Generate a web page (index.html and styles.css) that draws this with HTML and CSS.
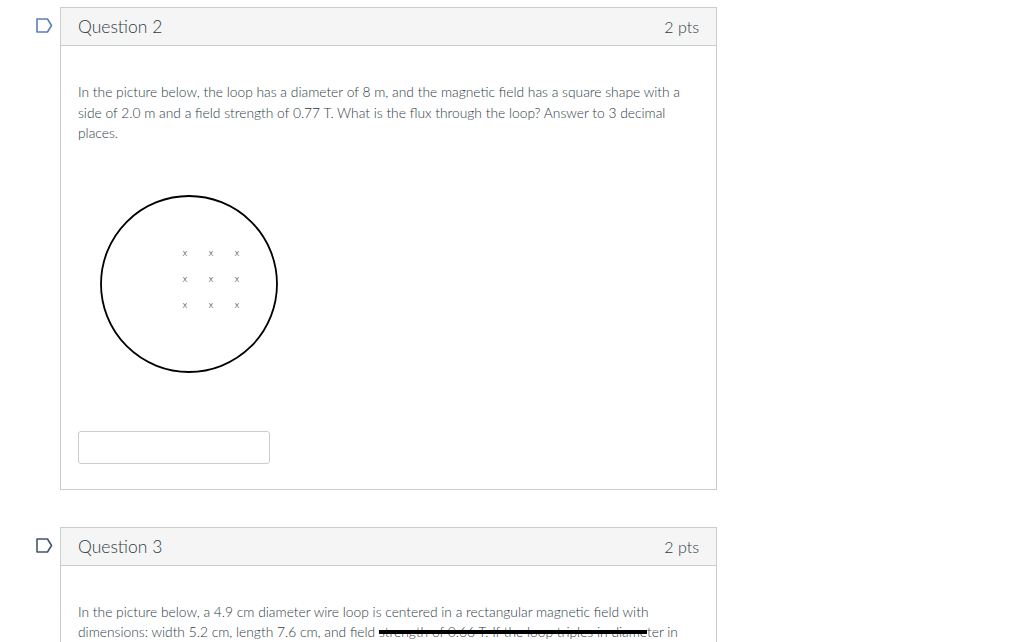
FILE: index.html
```html
<!DOCTYPE html>
<html>
<head>
<meta charset="utf-8">
<link rel="stylesheet" href="styles.css">
</head>
<body>
<div class="page">
  <div class="question">
    <div class="flag-col">
      <svg class="flag flag-blue" width="17" height="15" viewBox="0 0 17 15"><path d="M1 1 H11.5 L15.5 7.5 L11.5 14 H1 Z" fill="none" stroke-width="1.6" stroke-linejoin="round"/></svg>
    </div>
    <div class="card">
      <div class="card-header">
        <span class="q-title">Question 2</span>
        <span class="q-pts">2 pts</span>
      </div>
      <div class="card-body">
        <p class="q-text">In the picture below, the loop has a diameter of 8 m, and the magnetic field has a square shape with a side of 2.0 m and a field strength of 0.77 T. What is the flux through the loop? Answer to 3 decimal places.</p>
        <svg class="figure" width="200" height="200" viewBox="0 0 200 200">
          <circle cx="100" cy="100" r="88" fill="none" stroke="#000" stroke-width="1.8"/>
          <g class="xs" font-size="9" text-anchor="middle" fill="#111">
            <text x="96" y="72">x</text><text x="122" y="72">x</text><text x="148" y="72">x</text>
            <text x="96" y="98">x</text><text x="122" y="98">x</text><text x="148" y="98">x</text>
            <text x="96" y="124">x</text><text x="122" y="124">x</text><text x="148" y="124">x</text>
          </g>
        </svg>
        <input class="answer" type="text">
      </div>
    </div>
  </div>

  <div class="question">
    <div class="flag-col">
      <svg class="flag flag-dark" width="17" height="15" viewBox="0 0 17 15"><path d="M1 1 H11.5 L15.5 7.5 L11.5 14 H1 Z" fill="none" stroke-width="1.6" stroke-linejoin="round"/></svg>
    </div>
    <div class="card">
      <div class="card-header">
        <span class="q-title">Question 3</span>
        <span class="q-pts">2 pts</span>
      </div>
      <div class="card-body">
        <p class="q-text">In the picture below, a 4.9 cm diameter wire loop is centered in a rectangular magnetic field with dimensions: width 5.2 cm, length 7.6 cm, and field <span class="scribble">strength of 0.66 T. If the loop triples in diame</span>ter in</p>
      </div>
    </div>
  </div>
</div>
</body>
</html>
```

FILE: styles.css
```css
html, body {
  margin: 0;
  padding: 0;
  background: #fff;
}
body {
  font-family: Lato, "Liberation Sans", sans-serif;
  font-weight: 300;
  color: #2d3b45;
}
.page {
  padding: 7px 0 0 36px;
}
.question {
  display: flex;
  align-items: flex-start;
  margin-bottom: 37px;
}
.flag-col {
  width: 24px;
  flex: none;
  padding-top: 11px;
}
.flag {
  display: block;
}
.flag-blue path {
  stroke: #5d7fb5;
}
.flag-dark path {
  stroke: #44566e;
}
.card {
  width: 655px;
  border: 1px solid #c7cdd1;
  background: #fff;
}
.card-header {
  height: 37px;
  background: #f5f5f5;
  border-bottom: 1px solid #c7cdd1;
  display: flex;
  align-items: center;
  justify-content: space-between;
  padding: 0 17px 0 17px;
}
.q-title {
  font-size: 17.5px;
  font-weight: 300;
}
.q-pts {
  font-size: 16px;
  font-weight: 300;
}
.card-body {
  padding: 36px 17px 25px 17px;
}
.q-text {
  margin: 0;
  font-size: 13.8px;
  font-weight: 300;
  line-height: 20.6px;
  color: #2d3b45;
}
.figure {
  display: block;
  margin: 40px 0 0 11px;
}
.xs {
  font-family: "DejaVu Sans", sans-serif;
}
.answer {
  display: block;
  margin-top: 47px;
  width: 192px;
  height: 33px;
  box-sizing: border-box;
  border: 1px solid #c7cdd1;
  border-radius: 3px;
  background: #fff;
  padding: 0 8px;
  font-family: Lato, sans-serif;
}
.scribble {
  text-decoration: line-through;
  text-decoration-color: #000;
  text-decoration-thickness: 4px;
}
```
